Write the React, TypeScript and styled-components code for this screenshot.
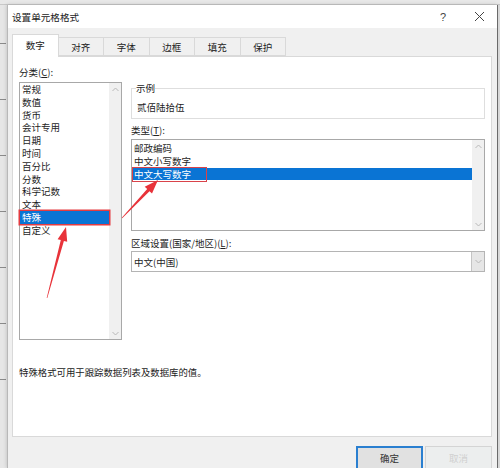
import React from "react";
import styled, { createGlobalStyle } from "styled-components";

const GlobalStyle = createGlobalStyle`
  html, body {
    margin: 0;
    padding: 0;
  }
  body {
    width: 500px;
    height: 468px;
    overflow: hidden;
    background: #e4e4e4;
    font-family: "Noto Sans CJK SC", "Noto Sans", sans-serif;
    color: #1e1e1e;
  }
`;

const categories = ["常规", "数值", "货币", "会计专用", "日期", "时间", "百分比", "分数", "科学记数", "文本", "特殊", "自定义"];
const types = ["邮政编码", "中文小写数字", "中文大写数字"];
const tabs = ["数字", "对齐", "字体", "边框", "填充", "保护"];

// arrow polygon, tapering from the tail to the head
const arrowPoints = (x1: number, y1: number, x2: number, y2: number) => {
    const len = Math.hypot(x2 - x1, y2 - y1);
    const ux = (x2 - x1) / len;
    const uy = (y2 - y1) / len;
    const nx = -uy;
    const ny = ux;
    const head = 14;
    const bx = x2 - ux * head;
    const by = y2 - uy * head;
    const pts = [
        [x1 + nx * 0.3, y1 + ny * 0.3],
        [bx + nx * 1.6, by + ny * 1.6],
        [bx + nx * 5, by + ny * 5],
        [x2, y2],
        [bx - nx * 5, by - ny * 5],
        [bx - nx * 1.6, by - ny * 1.6],
        [x1 - nx * 0.3, y1 - ny * 0.3],
    ];
    return pts.map(([x, y]) => `${x.toFixed(1)},${y.toFixed(1)}`).join(" ");
};

const Chevron: React.FC<{ up?: boolean }> = ({ up }) => (
    <svg width="7" height="5" viewBox="0 0 7 5">
        <polyline
            points={up ? "0.5,4 3.5,1 6.5,4" : "0.5,1 3.5,4 6.5,1"}
            fill="none"
            stroke="#b8b8b8"
            strokeWidth="1"
        />
    </svg>
);

const App: React.FC = () => {
    return (
        <Screen>
            <GlobalStyle />
            <Ribbon />
            <Main>
                <SheetEdge>
                    {[0, 1, 2, 3, 4, 5, 6].map((i) => <RowLine key={i} />)}
                </SheetEdge>
                <Dialog>
                    <TitleBar>
                        <Title>设置单元格格式</Title>
                        <TitleButton>?</TitleButton>
                        <TitleButton>
                            <svg width="11" height="11" viewBox="0 0 11 11">
                                <path d="M1 1L10 10M10 1L1 10" stroke="#444" strokeWidth="1" />
                            </svg>
                        </TitleButton>
                    </TitleBar>
                    <Body>
                        <TabRow>
                            {tabs.map((t, i) => (
                                <Tab key={t} $active={i === 0}>{t}</Tab>
                            ))}
                        </TabRow>
                        <Panel>
                            <Columns>
                                <Column>
                                    <Label>分类(<u>C</u>):</Label>
                                    <ListBox $height={258}>
                                        <Items>
                                            {categories.map((c) => (
                                                <Item key={c} $selected={c === "特殊"} $marked={c === "特殊"}>{c}</Item>
                                            ))}
                                        </Items>
                                        <ScrollTrack>
                                            <Chevron up />
                                            <Chevron />
                                        </ScrollTrack>
                                    </ListBox>
                                </Column>
                                <Column $top={16}>
                                    <Group>
                                        <Legend>示例</Legend>
                                        <Sample>贰佰陆拾伍</Sample>
                                    </Group>
                                    <Label $top={5} $bottom={2}>类型(<u>T</u>):</Label>
                                    <ListBox $height={92}>
                                        <Items $padTop={2}>
                                            {types.map((t) => (
                                                <Item key={t} $selected={t === "中文大写数字"}>
                                                    {t}
                                                    {t === "中文大写数字" ? <Mark /> : null}
                                                </Item>
                                            ))}
                                        </Items>
                                        <ScrollTrack>
                                            <Chevron up />
                                            <Chevron />
                                        </ScrollTrack>
                                    </ListBox>
                                    <Label $top={6} $bottom={1}>区域设置(国家/地区)(<u>L</u>):</Label>
                                    <Select>
                                        <SelectValue>中文(中国)</SelectValue>
                                        <SelectArrow>
                                            <Chevron />
                                        </SelectArrow>
                                    </Select>
                                </Column>
                            </Columns>
                            <Description>特殊格式可用于跟踪数据列表及数据库的值。</Description>
                        </Panel>
                        <Footer>
                            <Button $primary>确定</Button>
                            <Button>取消</Button>
                        </Footer>
                    </Body>
                </Dialog>
                <RightEdge />
            </Main>
            <Overlay width="500" height="468" viewBox="0 0 500 468">
                <polygon points={arrowPoints(47, 298, 66, 227)} fill="#e8333a" />
                <polygon points={arrowPoints(122, 218, 158, 180)} fill="#e8333a" />
            </Overlay>
        </Screen>
    );
};

const Screen = styled.div`
    position: relative;
    width: 500px;
    height: 468px;
    display: flex;
    flex-direction: column;
    overflow: hidden;
`;

const Ribbon = styled.div`
    height: 5px;
    flex: none;
    background: #e8e8e8;
    border-bottom: 1px solid #c8c8c8;
    box-sizing: border-box;
`;

const Main = styled.div`
    flex: 1;
    display: flex;
    min-height: 0;
`;

const SheetEdge = styled.div`
    width: 7px;
    flex: none;
    background: #e6e6e6;
    display: flex;
    flex-direction: column;
    padding-top: 38px;
    gap: 55px;
    box-sizing: border-box;
`;

const RowLine = styled.div`
    height: 1px;
    background: #8a8a8a;
    width: 6px;
`;

const RightEdge = styled.div`
    width: 2px;
    flex: none;
    background: #d8d8d8;
    border-left: 1px solid #6a6a6a;
`;

const Dialog = styled.div`
    flex: 1;
    display: flex;
    flex-direction: column;
    background: #f0f0f0;
    border-left: 1px solid #b8b8b8;
    box-shadow: 0 0 4px rgba(0, 0, 0, 0.2);
`;

const TitleBar = styled.div`
    height: 23px;
    flex: none;
    background: #fff;
    display: flex;
    align-items: center;
    padding-left: 4px;
`;

const Title = styled.div`
    flex: 1;
    font-size: 9.6px;
    color: #222;
`;

const TitleButton = styled.div`
    width: 36px;
    height: 23px;
    display: flex;
    align-items: center;
    justify-content: center;
    font-size: 11px;
    color: #444;
    font-family: "Liberation Sans", sans-serif;
`;

const Body = styled.div`
    flex: 1;
    display: flex;
    flex-direction: column;
    padding: 6px 5px 0 4px;
`;

const TabRow = styled.div`
    display: flex;
    align-items: flex-end;
    height: 22px;
    padding-left: 1px;
`;

const Tab = styled.div<{ $active?: boolean }>`
    width: 46.5px;
    height: ${({ $active }) => ($active ? "23px" : "19px")};
    margin-bottom: ${({ $active }) => ($active ? "-1px" : "0")};
    margin-left: -1px;
    box-sizing: border-box;
    border: 1px solid #d9d9d9;
    border-bottom: ${({ $active }) => ($active ? "none" : "1px solid #d9d9d9")};
    background: ${({ $active }) => ($active ? "#fff" : "#f0f0f0")};
    position: relative;
    z-index: ${({ $active }) => ($active ? 1 : 0)};
    display: flex;
    align-items: center;
    justify-content: center;
    font-size: 9.5px;
    color: #222;
    padding-bottom: ${({ $active }) => ($active ? "2px" : "0")};
`;

const Panel = styled.div`
    height: 381px;
    box-sizing: border-box;
    background: #fff;
    border: 1px solid #d9d9d9;
    padding: 9px 6px 0 6px;
`;

const Columns = styled.div`
    display: grid;
    grid-template-columns: 103px 1fr;
    column-gap: 9px;
    align-items: start;
`;

const Column = styled.div<{ $top?: number }>`
    display: flex;
    flex-direction: column;
    padding-top: ${({ $top }) => $top ?? 0}px;
`;

const Label = styled.div<{ $top?: number; $bottom?: number }>`
    font-size: 9.5px;
    line-height: 13px;
    height: 13px;
    margin-top: ${({ $top }) => $top ?? 0}px;
    margin-bottom: ${({ $bottom }) => $bottom ?? 3}px;
    color: #222;
    u {
        text-underline-offset: 1px;
    }
`;

const ListBox = styled.div<{ $height: number }>`
    height: ${({ $height }) => $height}px;
    box-sizing: border-box;
    border: 1px solid #a8a8a8;
    display: grid;
    grid-template-columns: 1fr 12px;
    background: #fff;
`;

const Items = styled.div<{ $padTop?: number }>`
    padding-top: ${({ $padTop }) => $padTop ?? 0}px;
    display: flex;
    flex-direction: column;
`;

const Item = styled.div<{ $selected?: boolean; $marked?: boolean }>`
    position: relative;
    height: 12.8px;
    line-height: 12.8px;
    font-size: 9.5px;
    padding-left: 2px;
    white-space: nowrap;
    color: ${({ $selected }) => ($selected ? "#fff" : "#1e1e1e")};
    background: ${({ $selected }) => ($selected ? "#0a74d4" : "transparent")};
    box-shadow: ${({ $marked }) => ($marked ? "0 0 0 1.5px #e43b40" : "none")};
`;

const Mark = styled.span`
    position: absolute;
    left: 0;
    top: -1px;
    width: 73px;
    height: 13px;
    border: 1.5px solid #d9434a;
`;

const ScrollTrack = styled.div`
    background: #f0f0f0;
    display: flex;
    flex-direction: column;
    justify-content: space-between;
    align-items: center;
    padding: 4px 0 3px;
`;

const Group = styled.fieldset`
    margin: 0;
    padding: 0 4px 4px;
    border: 1px solid #dedede;
    min-width: 0;
`;

const Legend = styled.legend`
    padding: 0;
    font-size: 9.5px;
    line-height: 13px;
    color: #222;
`;

const Sample = styled.div`
    font-size: 9.5px;
    line-height: 13px;
    margin-top: 6px;
    padding-left: 1px;
    color: #222;
`;

const Select = styled.div`
    height: 21px;
    box-sizing: border-box;
    border: 1px solid #b4b4b4;
    display: flex;
    align-items: stretch;
`;

const SelectValue = styled.div`
    flex: 1;
    display: flex;
    align-items: center;
    padding-left: 2px;
    font-size: 9.5px;
    color: #1e1e1e;
`;

const SelectArrow = styled.div`
    width: 12px;
    background: #e6e6e6;
    border-left: 1px solid #c4c4c4;
    display: flex;
    align-items: center;
    justify-content: center;
`;

const Description = styled.div`
    margin-top: 26px;
    font-size: 9.4px;
    line-height: 13px;
    color: #222;
`;

const Footer = styled.div`
    display: flex;
    justify-content: flex-end;
    gap: 2px;
    padding-top: 9px;
`;

const Button = styled.div<{ $primary?: boolean }>`
    width: 67px;
    height: 24px;
    box-sizing: border-box;
    border: ${({ $primary }) => ($primary ? "2px solid #2a7fd0" : "1px solid #d4d4d4")};
    background: ${({ $primary }) => ($primary ? "#e1e1e1" : "#eceeee")};
    display: flex;
    align-items: center;
    justify-content: center;
    font-size: 9.5px;
    color: ${({ $primary }) => ($primary ? "#333" : "#d0d0d0")};
`;

const Overlay = styled.svg`
    position: absolute;
    left: 0;
    top: 0;
    pointer-events: none;
`;

export default App;
